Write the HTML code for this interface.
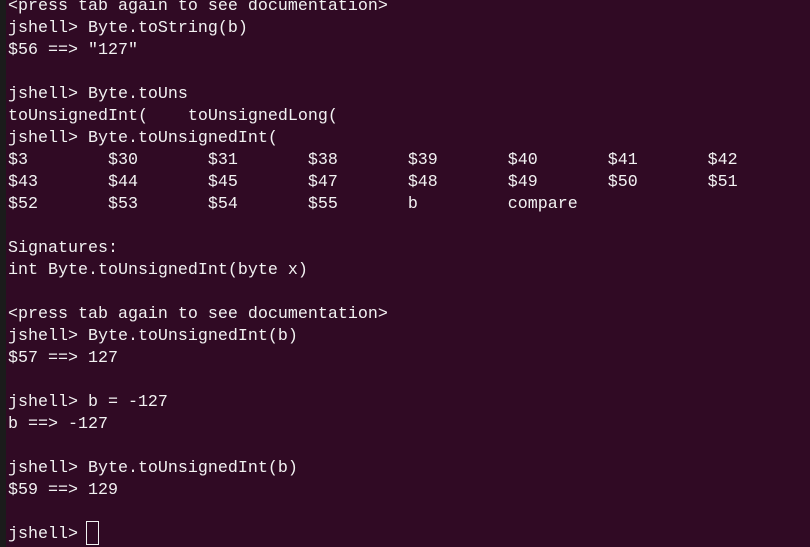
<!DOCTYPE html>
<html><head><style>
html,body{margin:0;padding:0;width:810px;height:547px;overflow:hidden;background:#300a24;}
.strip{position:absolute;left:0;top:0;width:6px;height:547px;background:#1b1b1b;}
pre{position:absolute;left:8px;top:-4px;margin:0;font-family:"Liberation Mono",monospace;font-size:16.67px;line-height:22px;color:#f2f2f2;white-space:pre;}
.cur{position:absolute;left:86px;top:521px;width:13px;height:24px;border:1px solid #f2f2f2;box-sizing:border-box;}
</style></head><body>
<div class="strip"></div>
<pre>&lt;press tab again to see documentation&gt;
jshell&gt; Byte.toString(b)
$56 ==&gt; "127"

jshell&gt; Byte.toUns
toUnsignedInt(    toUnsignedLong(
jshell&gt; Byte.toUnsignedInt(
$3        $30       $31       $38       $39       $40       $41       $42
$43       $44       $45       $47       $48       $49       $50       $51
$52       $53       $54       $55       b         compare

Signatures:
int Byte.toUnsignedInt(byte x)

&lt;press tab again to see documentation&gt;
jshell&gt; Byte.toUnsignedInt(b)
$57 ==&gt; 127

jshell&gt; b = -127
b ==&gt; -127

jshell&gt; Byte.toUnsignedInt(b)
$59 ==&gt; 129

jshell&gt; </pre>
<div class="cur"></div>
</body></html>
